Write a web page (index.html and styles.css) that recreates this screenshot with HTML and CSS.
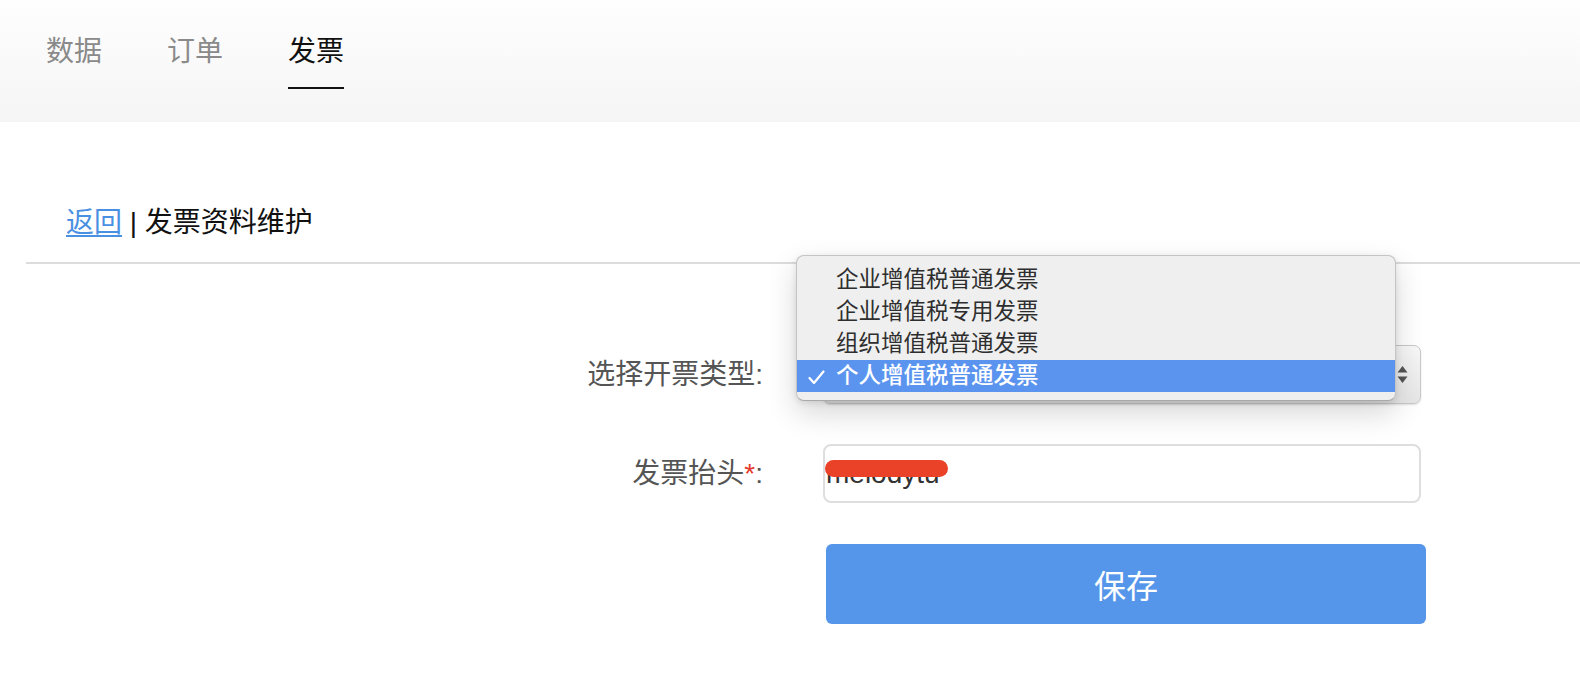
FILE: index.html
```html
<!DOCTYPE html>
<html lang="zh-CN">
<head>
<meta charset="utf-8">
<title>发票资料维护</title>
<link rel="stylesheet" href="styles.css">
</head>
<body>
<header class="topbar">
  <nav class="tabs">
    <a class="tab" href="#">数据</a>
    <a class="tab" href="#">订单</a>
    <a class="tab active" href="#">发票</a>
  </nav>
</header>
<main class="page">
  <div class="crumb"><a class="back" href="#">返回</a> | 发票资料维护</div>
  <div class="divider"></div>
  <form class="form">
    <label class="label">选择开票类型:</label>
    <div class="field">
      <div class="select">
        <svg class="arrows" width="11" height="18" viewBox="0 0 11 18"><path d="M5.5 0 L10.5 6.5 L0.5 6.5 Z M0.5 10.5 L10.5 10.5 L5.5 17 Z" fill="#555"/></svg>
      </div>
      <ul class="menu">
        <li class="item">企业增值税普通发票</li>
        <li class="item">企业增值税专用发票</li>
        <li class="item">组织增值税普通发票</li>
        <li class="item selected"><svg class="check" width="17" height="15" viewBox="0 0 17 15"><path d="M1.5 8 L6 13 L15.5 1.5" fill="none" stroke="#fff" stroke-width="2.2" stroke-linecap="round" stroke-linejoin="round"/></svg>个人增值税普通发票</li>
      </ul>
    </div>
    <label class="label">发票抬头<span class="req">*</span>:</label>
    <div class="field">
      <div class="input">melodytu<span class="redact"></span></div>
    </div>
    <div></div>
    <button class="save" type="button">保存</button>
  </form>
</main>
</body>
</html>
```

FILE: styles.css
```css
html, body {
  margin: 0;
  padding: 0;
  background: #fff;
}
body {
  font-family: "Liberation Sans", "Noto Sans CJK SC", sans-serif;
  color: #111;
  width: 1580px;
  height: 676px;
  overflow: hidden;
}
.topbar {
  height: 122px;
  background: linear-gradient(to bottom, #fefefe, #f5f5f5);
  box-sizing: border-box;
  padding-left: 46px;
  padding-top: 32px;
}
.tabs {
  display: flex;
  gap: 65px;
}
.tab {
  font-size: 28px;
  line-height: 40px;
  color: #8a8a8a;
  text-decoration: none;
  padding-bottom: 15px;
  border-bottom: 2px solid transparent;
}
.tab.active {
  color: #111;
  border-bottom-color: #111;
}
.crumb {
  margin-top: 81px;
  padding-left: 66px;
  font-size: 28px;
  line-height: 40px;
  color: #111;
}
.back {
  color: #4a90e2;
  text-decoration: underline;
  text-underline-offset: 3px;
  text-decoration-thickness: 2px;
}
.divider {
  margin-top: 19px;
  margin-left: 26px;
  height: 2px;
  background: #dcdcdc;
}
.form {
  display: grid;
  grid-template-columns: 763px 598px;
  column-gap: 60px;
  row-gap: 40px;
  align-items: center;
  padding-top: 81px;
}
.label {
  text-align: right;
  font-size: 28px;
  line-height: 40px;
  color: #555;
}
.req {
  color: #e53a2e;
}
.field {
  position: relative;
}
.select {
  height: 59px;
  box-sizing: border-box;
  border: 1px solid #c9c9c9;
  border-radius: 7px;
  background: linear-gradient(to bottom, #f8f8f8, #e6e6e6);
  box-shadow: 0 1px 2px rgba(0,0,0,0.12);
  display: flex;
  align-items: center;
  justify-content: flex-end;
  padding-right: 12px;
}
.arrows {
  display: block;
}
.menu {
  position: absolute;
  left: -27px;
  top: -90px;
  width: 600px;
  height: 146px;
  box-sizing: border-box;
  margin: 0;
  padding: 8px 0;
  list-style: none;
  background: #efefef;
  border: 1px solid #c4c4c4;
  border-bottom-color: #a9a9a9;
  border-radius: 8px;
  box-shadow: 0 12px 30px rgba(0,0,0,0.16), 0 2px 6px rgba(0,0,0,0.1);
  z-index: 5;
}
.item {
  position: relative;
  height: 32px;
  line-height: 32px;
  padding-left: 39px;
  font-size: 22.5px;
  color: #2e2e2e;
}
.item.selected {
  background: #5b94ee;
  color: #fff;
  font-weight: 500;
}
.check {
  position: absolute;
  left: 11px;
  top: 10px;
}
.input {
  position: relative;
  height: 59px;
  box-sizing: border-box;
  border: 2px solid #dedede;
  border-radius: 8px;
  background: #fff;
  padding-left: 1px;
  font-family: "Liberation Sans", sans-serif;
  font-size: 28px;
  line-height: 55px;
  color: #333;
}
.redact {
  position: absolute;
  left: 0;
  top: 14px;
  width: 123px;
  height: 17px;
  border-radius: 9px;
  background: #ea4129;
}
.save {
  width: 600px;
  height: 80px;
  margin-left: 3px;
  margin-top: 1px;
  border: none;
  border-radius: 6px;
  background: #5596ea;
  color: #fff;
  font-family: "Noto Sans CJK SC", sans-serif;
  font-size: 32px;
  padding: 0;
}
```
